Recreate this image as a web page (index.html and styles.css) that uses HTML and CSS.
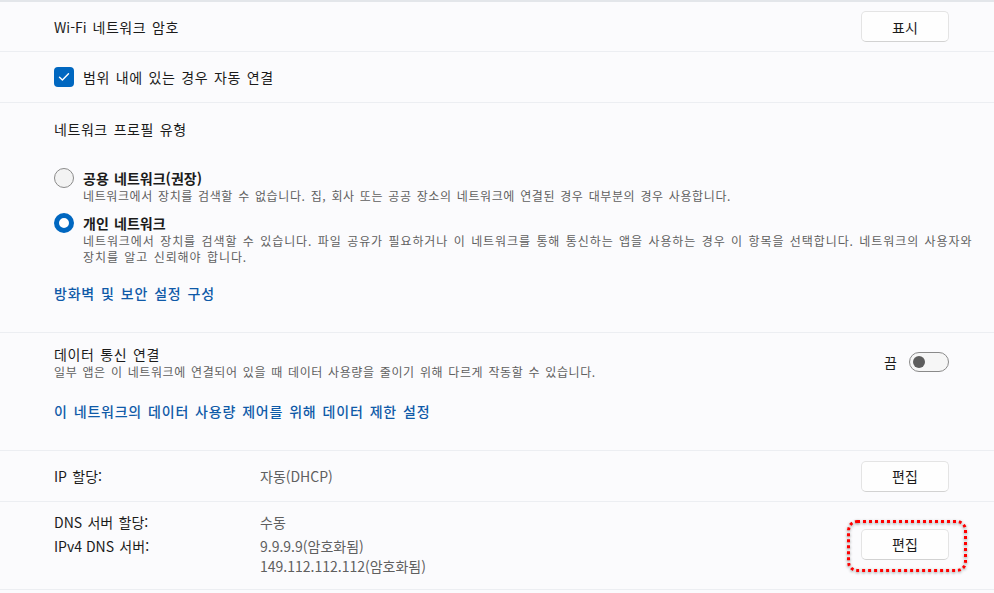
FILE: index.html
```html
<!DOCTYPE html>
<html lang="ko">
<head>
<meta charset="utf-8">
<link rel="stylesheet" href="styles.css">
</head>
<body>
<div class="page">
  <div class="row row-simple">
    <span class="label"><span class="en">Wi-Fi</span> 네트워크 암호</span>
    <button class="btn">표시</button>
  </div>
  <div class="row row-simple row-check">
    <span class="checkbox"><svg width="12" height="10" viewBox="0 0 12 10"><path d="M1.5 5.2 L4.4 8 L10.5 1.8" fill="none" stroke="#fff" stroke-width="1.4" stroke-linecap="round" stroke-linejoin="round"/></svg></span>
    <span class="label">범위 내에 있는 경우 자동 연결</span>
  </div>
  <div class="section profile">
    <div class="label">네트워크 프로필 유형</div>
    <div class="options">
      <div class="option">
        <span class="radio"></span>
        <div class="option-text">
          <div class="option-title">공용 네트워크(권장)</div>
          <div class="desc">네트워크에서 장치를 검색할 수 없습니다. 집, 회사 또는 공공 장소의 네트워크에 연결된 경우 대부분의 경우 사용합니다.</div>
        </div>
      </div>
      <div class="option option-2">
        <span class="radio radio-on"></span>
        <div class="option-text">
          <div class="option-title">개인 네트워크</div>
          <div class="desc desc-wide">네트워크에서 장치를 검색할 수 있습니다. 파일 공유가 필요하거나 이 네트워크를 통해 통신하는 앱을 사용하는 경우 이 항목을 선택합니다. 네트워크의 사용자와<br>장치를 알고 신뢰해야 합니다.</div>
        </div>
      </div>
    </div>
    <div class="link link-fw">방화벽 및 보안 설정 구성</div>
  </div>
  <div class="section metered">
    <div class="metered-head">
      <div class="metered-text">
        <div class="label">데이터 통신 연결</div>
        <div class="desc">일부 앱은 이 네트워크에 연결되어 있을 때 데이터 사용량을 줄이기 위해 다르게 작동할 수 있습니다.</div>
      </div>
      <div class="toggle-wrap">
        <span class="toggle-label">끔</span>
        <span class="toggle"><span class="knob"></span></span>
      </div>
    </div>
    <div class="link link-data">이 네트워크의 데이터 사용량 제어를 위해 데이터 제한 설정</div>
  </div>
  <div class="row row-simple">
    <div class="kv">
      <span class="label key"><span class="en">IP</span> 할당:</span>
      <span class="value">자동(DHCP)</span>
    </div>
    <button class="btn">편집</button>
  </div>
  <div class="row row-dns">
    <div class="kv-grid">
      <span class="label key"><span class="en">DNS</span> 서버 할당:</span>
      <span class="value">수동</span>
      <span class="label key"><span class="en">IPv4 DNS</span> 서버:</span>
      <span class="value">9.9.9.9(암호화됨)<br>149.112.112.112(암호화됨)</span>
    </div>
    <div class="btn-holder">
      <button class="btn">편집</button>
      <span class="highlight"></span>
    </div>
  </div>
</div>
</body>
</html>
```
FILE: styles.css
```css
* { box-sizing: border-box; }
html, body {
  margin: 0;
  padding: 0;
  background: #fbfbfd;
}
body {
  font-family: "Segoe UI", "Noto Sans CJK KR", sans-serif;
  color: #1b1b1b;
  font-size: 14px;
  width: 994px;
  height: 593px;
  overflow: hidden;
}
.page {
  border-top: 2px solid #e3e6ea;
}
.row, .section {
  border-bottom: 1px solid #eceef2;
  padding-left: 54px;
  padding-right: 45px;
}
.row-simple {
  display: flex;
  align-items: center;
  justify-content: space-between;
  height: 51px;
}
.row-simple:first-child { height: 50px; }
.row-check {
  justify-content: flex-start;
  gap: 9px;
}
.label {
  line-height: 20px;
  letter-spacing: 0.04em;
  word-spacing: 0.1em;
}
.en {
  letter-spacing: 0;
  word-spacing: 0;
}
.btn {
  width: 88px;
  height: 31px;
  background: #fefefe;
  border: 1px solid #e4e4e4;
  border-bottom-color: #d2d2d2;
  border-radius: 5px;
  font-family: inherit;
  font-size: 14px;
  color: #1b1b1b;
  padding: 0;
}
.checkbox {
  width: 20px;
  height: 20px;
  border-radius: 4px;
  background: #0067c0;
  display: flex;
  align-items: center;
  justify-content: center;
}
.profile {
  padding-top: 16px;
  padding-bottom: 29px;
}
.options {
  margin-top: 29px;
  margin-right: -40px;
}
.option {
  display: flex;
  gap: 9px;
}
.option-2 { margin-top: 9px; }
.radio {
  width: 20px;
  height: 20px;
  border-radius: 50%;
  border: 1px solid #8a8a8a;
  background: #f3f3f3;
  flex: none;
}
.radio-on {
  border: 5px solid #0067c0;
  background: #fff;
}
.option-title {
  font-weight: 700;
  line-height: 20px;
  letter-spacing: 0;
  word-spacing: 0.1em;
}
.desc {
  font-size: 12px;
  line-height: 16px;
  color: #5f5f5f;
  letter-spacing: 0.05em;
  word-spacing: 0.1em;
}
.desc-wide {
  letter-spacing: 0.076em;
  white-space: nowrap;
}
.link {
  color: #0f5aa8;
  font-weight: 500;
  line-height: 20px;
  letter-spacing: 0.055em;
  word-spacing: 0.1em;
}
.link-fw { margin-top: 18px; }
.metered {
  padding-top: 11px;
  padding-bottom: 29px;
}
.metered-head {
  display: flex;
  justify-content: space-between;
  align-items: center;
}
.toggle-wrap {
  display: flex;
  align-items: center;
  gap: 12px;
}
.toggle-label { line-height: 20px; }
.toggle {
  width: 40px;
  height: 20px;
  border: 1px solid #8a8a8a;
  border-radius: 10px;
  background: #f6f6f6;
  display: flex;
  align-items: center;
  padding-left: 3px;
}
.knob {
  width: 12px;
  height: 12px;
  border-radius: 50%;
  background: #5d5d5d;
}
.link-data { margin-top: 21px; }
.kv {
  display: flex;
}
.key {
  width: 206px;
  letter-spacing: 0;
}
.value {
  color: #5f5f5f;
  line-height: 20px;
}
.row-dns {
  display: flex;
  align-items: center;
  justify-content: space-between;
  padding-top: 10px;
  padding-bottom: 13px;
}
.kv-grid {
  display: grid;
  grid-template-columns: 206px auto;
  row-gap: 4px;
}
.btn-holder {
  position: relative;
}
.btn-holder .btn { display: block; }
.highlight {
  position: absolute;
  left: -14px;
  top: -9px;
  width: 120px;
  height: 52px;
  border: 3px dotted #ff0000;
  border-radius: 10px;
  filter: drop-shadow(0 1px 1.5px rgba(0,0,0,0.45));
}
```
